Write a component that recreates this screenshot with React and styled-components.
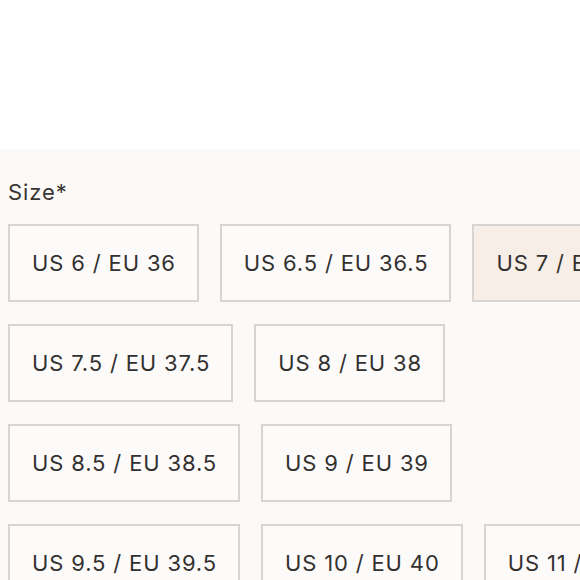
import React from 'react'
import styled, { createGlobalStyle } from 'styled-components'

const GlobalStyle = createGlobalStyle`
  html, body {
    margin: 0;
    padding: 0;
    background: #ffffff;
    overflow: hidden;
  }
  body {
    font-family: Inter, 'Liberation Sans', sans-serif;
    color: #333130;
  }
`

const TopSpace = styled.div`
  height: 149px;
  background: #ffffff;
`

const SizePanel = styled.section`
  background: #fcf9f7;
  padding: 28px 8px 40px;
  min-height: 500px;
`

const Label = styled.div`
  font-size: 22px;
  line-height: 30px;
  letter-spacing: 0.9px;
  color: #383634;
  margin-bottom: 17px;
`

const Options = styled.div`
  display: flex;
  flex-wrap: wrap;
  gap: 22px 21px;
  width: 682px;
`

const SizeButton = styled.button`
  box-sizing: border-box;
  height: 78px;
  padding: 0 21px 0 22px;
  border: 2px solid #d8d4d1;
  background: ${(p) => (p.selected ? '#f7eee7' : '#fdfbfa')};
  font-family: Inter, 'Liberation Sans', sans-serif;
  font-size: 22px;
  letter-spacing: 0.85px;
  color: #333130;
  white-space: nowrap;
  cursor: pointer;
`

const sizes = [
  'US 6 / EU 36',
  'US 6.5 / EU 36.5',
  'US 7 / EU 37',
  'US 7.5 / EU 37.5',
  'US 8 / EU 38',
  'US 8.5 / EU 38.5',
  'US 9 / EU 39',
  'US 9.5 / EU 39.5',
  'US 10 / EU 40',
  'US 11 / EU 41',
]

export default function App() {
  return (
    <>
      <GlobalStyle />
      <TopSpace />
      <SizePanel>
        <Label>Size*</Label>
        <Options>
          {sizes.map((s) => (
            <SizeButton key={s} selected={s === 'US 7 / EU 37'}>
              {s}
            </SizeButton>
          ))}
        </Options>
      </SizePanel>
    </>
  )
}
